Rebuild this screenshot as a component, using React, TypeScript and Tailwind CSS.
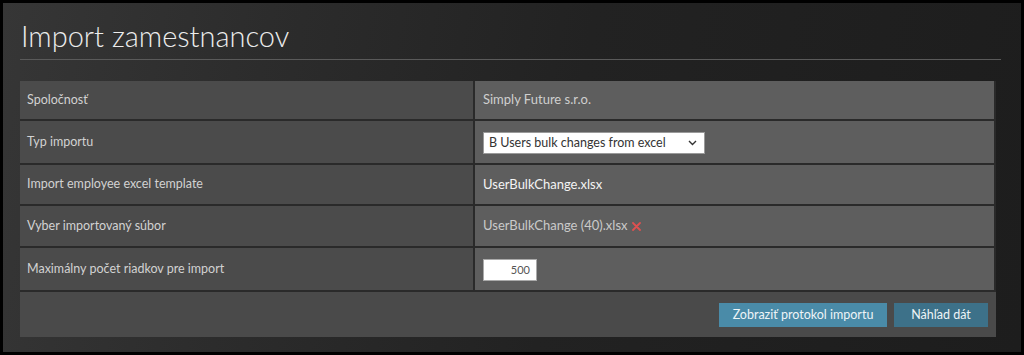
import React from "react";

const font = { fontFamily: 'Lato, "Open Sans", "Liberation Sans", sans-serif' };

function Row({ label, children, h }: { label: string; children: React.ReactNode; h: string }) {
  return (
    <div className={`flex border-b-2 border-[#2a2a2a] ${h}`}>
      <div className="w-[455px] shrink-0 bg-[#4b4b4b] border-r-2 border-[#2a2a2a] flex items-center pl-[7px] text-[12.5px] text-[#d2d2d2]">
        {label}
      </div>
      <div className="flex-1 bg-[#5e5e5e] border-r-2 border-[#2a2a2a] flex items-center pl-[8px] text-[13px]">
        {children}
      </div>
    </div>
  );
}

export default function App() {
  return (
    <div className="w-[1024px] h-[355px] bg-black p-[3px]" style={font}>
      <div className="h-full bg-[linear-gradient(100deg,#363636_0%,#2c2c2c_25%,#222222_55%,#1d1d1d_100%)] pl-[17px] pr-[22px] pt-[13px]">
        <h1 className="text-[29px] font-light text-[#ececec] leading-[40px] pl-[1px]">Import zamestnancov</h1>
        <div className="mt-[3px] h-px bg-[#5a5a5a] w-[981px]" />
        <div className="mt-[21px] w-[976px]">
          <Row label="Spoločnosť" h="h-[40px]">
            <span className="text-[#cfcfcf]">Simply Future s.r.o.</span>
          </Row>
          <Row label="Typ importu" h="h-[44px]">
            <div className="w-[222px] h-[22px] bg-white border border-[#9a9a9a] flex items-center justify-between pl-[5px] pr-[7px] text-[12.5px] text-[#333] mt-[2px]">
              <span>B Users bulk changes from excel</span>
              <svg width="9" height="6" viewBox="0 0 9 6"><path d="M1 1l3.5 3.5L8 1" fill="none" stroke="#333" strokeWidth="1.4" /></svg>
            </div>
          </Row>
          <Row label="Import employee excel template" h="h-[41px]">
            <span className="text-[#f4f4f4]">UserBulkChange.xlsx</span>
          </Row>
          <Row label="Vyber importovaný súbor" h="h-[42px]">
            <span className="text-[#cacaca]">UserBulkChange (40).xlsx</span>
            <svg className="ml-[4px] mt-[1px]" width="9" height="9" viewBox="0 0 9 9">
              <path d="M1 1l7 7M8 1l-7 7" stroke="#de5050" strokeWidth="1.8" strokeLinecap="round" />
            </svg>
          </Row>
          <Row label="Maximálny počet riadkov pre import" h="h-[44px]">
            <div className="w-[54px] h-[22px] bg-white border border-[#aaaaaa] flex items-center justify-end pr-[6px] text-[11px] text-[#555] mt-[2px]">500</div>
          </Row>
          <div className="h-[45px] bg-[#4a4a4a] flex items-center justify-end gap-[7px] pr-[8px] pt-[1px]">
            <button className="h-[24px] w-[168px] bg-[#4a8ba8] text-[12.5px] text-[#eef4f7]">Zobraziť protokol importu</button>
            <button className="h-[24px] w-[94px] bg-[#3d7189] text-[12.5px] text-[#eef4f7]">Náhľad dát</button>
          </div>
        </div>
      </div>
    </div>
  );
}
